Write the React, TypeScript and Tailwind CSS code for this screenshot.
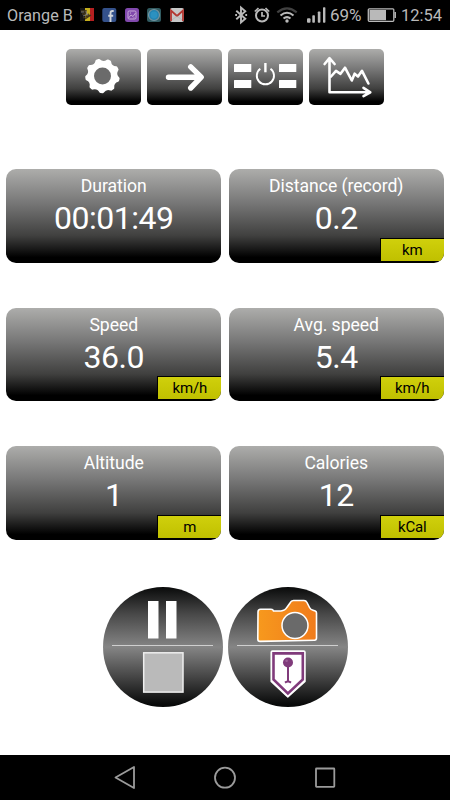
import React from "react";

const gearPath = () => {
  const point = (deg: number, r: number) => {
    const a = (deg * Math.PI) / 180;
    return `${(36.5 + r * Math.cos(a)).toFixed(2)} ${(26.9 + r * Math.sin(a)).toFixed(2)}`;
  };
  let d = `M${point(89, 16)}`;
  for (let i = 0; i < 9; i++) {
    const tip = 93 + i * 40;
    d += `L${point(tip + 4, 16)}Q${point(tip + 20, 11.6)} ${point(tip + 36, 16)}`;
  }
  return d + "Z";
};

const ToolButton: React.FC<{ label: string; children: React.ReactNode }> = ({ label, children }) => (
  <button
    aria-label={label}
    className="h-[56px] w-[75px] shrink-0 overflow-hidden rounded-[5px] bg-[linear-gradient(to_bottom,#adadab_0%,#777777_36%,#40403f_71%,#000000_94%)]"
  >
    <svg viewBox="0 0 75 56" className="block h-[56px] w-[75px]" fill="none" stroke="#fff">
      {children}
    </svg>
  </button>
);

const Toolbar = () => (
  <div className="flex justify-center gap-[6.3px] pt-[19px]">
    <ToolButton label="Settings">
      <path d={gearPath()} fill="#fff" strokeWidth="2.6" strokeLinejoin="round" />
      <circle cx="36.5" cy="26.9" r="8.5" fill="#6b6b6b" stroke="none" />
    </ToolButton>
    <ToolButton label="Next">
      <path d="M21.5 28.2H54M43.7 17.8L54.2 28.2L43.7 39" strokeWidth="5.4" strokeLinecap="round" strokeLinejoin="round" />
    </ToolButton>
    <ToolButton label="Display">
      <g fill="#fff" stroke="none">
        <rect x="6" y="15" width="17.3" height="8" rx=".5" />
        <rect x="6" y="31" width="17.3" height="8" rx=".5" />
        <rect x="51" y="15" width="17.3" height="8" rx=".5" />
        <rect x="51" y="31" width="17.3" height="8" rx=".5" />
      </g>
      <path d="M32.3 19.8A8.6 8.6 0 1 0 42.5 19.8" strokeWidth="1.9" />
      <path d="M37.4 14V23.3" strokeWidth="2.4" />
    </ToolButton>
    <ToolButton label="Chart">
      <g strokeLinecap="round" strokeLinejoin="round">
        <path d="M15.6 15L20.5 9.2L25.6 15M20.5 9.8V43.3H61M54.5 38.8L61.3 43.3L54.5 47.2" strokeWidth="2.6" />
        <path d="M22 27.5L27 21.8L31.5 24.8L36 18.7L42.8 31.5L45.6 24.7L49 27.5L53 21.8L59.4 34.5" strokeWidth="2.6" />
      </g>
    </ToolButton>
  </div>
);

const metrics = [
  { label: "Duration", value: "00:01:49", unit: "" },
  { label: "Distance (record)", value: "0.2", unit: "km" },
  { label: "Speed", value: "36.0", unit: "km/h" },
  { label: "Avg. speed", value: "5.4", unit: "km/h" },
  { label: "Altitude", value: "1", unit: "m" },
  { label: "Calories", value: "12", unit: "kCal" },
];

const MetricCard: React.FC<{ label: string; value: string; unit: string }> = ({ label, value, unit }) => (
  <div className="relative h-[93.5px] overflow-hidden rounded-[10px] bg-[linear-gradient(to_bottom,#adadab_0%,#777777_36%,#40403f_71%,#000000_94%)] text-center text-white">
    <div className="pt-[6px] text-[17.6px] leading-[22px] tracking-[-0.05px]">{label}</div>
    <div className="pt-[2px] text-[32px] leading-[38px] tracking-[-0.5px]">{value}</div>
    {unit && (
      <div className="absolute right-0 bottom-[2px] h-[23px] w-[64px] border-t border-l border-black bg-linear-to-b from-[#d0d00c] to-[#c0c000] text-[15px] leading-[22px] tracking-[-0.2px] text-black">
        {unit}
      </div>
    )}
  </div>
);

const StatusBar = () => (
  <header className="flex h-[30px] items-center bg-black pl-[7px] text-[#b9b9b9]">
    <span className="w-[73px] pt-[2px] text-[16.2px] whitespace-nowrap">Orange B</span>
    {/* Notifications */}
    <svg width="106" height="16" viewBox="0 0 106 16">
      <rect x="0" y="1" width="5" height="13" fill="#141414" />
      <rect x="5" y="1" width="5" height="13" fill="#c4ad1d" />
      <rect x="10" y="1" width="4" height="13" fill="#b52020" />
      <path d="M1 4h4v3H2m4-4v5l3-1m-6 4l7-3M5 12l6-4" fill="none" stroke="#42371d" strokeWidth="1.3" />
      <path d="M1 5h3M6 4l1 4M3 9l5-2" stroke="#999" strokeWidth=".7" />
      <rect x="22.3" y="1" width="14" height="14" rx="2" fill="#34518b" />
      <path d="M33.7 4h-1.2q-2 0-2 2v9M28.2 8.7h5" fill="none" stroke="#d0d4da" strokeWidth="1.9" />
      <rect x="45" y="1" width="14" height="14" rx="2.5" fill="#8149ad" />
      <g fill="none" stroke="#c4a9d5" strokeWidth="1">
        <rect x="48" y="4" width="8" height="8" rx="1.2" />
        <path d="M48.5 11L51 8L53 9.5L55.5 6M50 6h1M53.5 10.8h1" />
      </g>
      <rect x="67" y="1" width="14" height="14" rx="2.5" fill="#315b61" />
      <circle cx="74" cy="8" r="5.5" fill="#2384b2" stroke="#77929c" strokeWidth="1.2" />
      <circle cx="74" cy="8" r="3.4" fill="#2c91c0" />
      <rect x="90" y="1" width="14" height="14" rx="2" fill="#c7c7c7" />
      <path d="M91 14V3.5L97 9L103 3.5V14" fill="none" stroke="#b43630" strokeWidth="1.8" />
      <path d="M92 13L97 9L102 13" fill="none" stroke="#aaa" strokeWidth=".6" />
    </svg>
    {/* Bluetooth, alarm, wifi and signal */}
    <svg className="ml-[48px]" width="94" height="20" viewBox="0 0 94 20" fill="none" stroke="currentColor">
      <path d="M2.3 5.7L11.3 13.7L7 17.5V2.5L11.3 6.3L2.3 14.3" strokeWidth="1.9" />
      <path d="M1.2 10h1.8M11.3 10h1.8" strokeWidth="1.9" />
      <circle cx="28" cy="10.5" r="6" strokeWidth="2" />
      <path d="M28 7V11H31M20.8 6.5L24.5 3M35.2 6.5L31.5 3" strokeWidth="1.7" />
      <path d="M43.3 7.4Q53 -.5 62.7 7.4" stroke="#414141" strokeWidth="2.2" />
      <path d="M46.5 10.5Q53 5 59.5 10.5M49.5 13.5Q53 10.7 56.5 13.5" strokeWidth="2.1" />
      <circle cx="53" cy="16" r="1.7" fill="currentColor" stroke="none" />
      <g fill="currentColor" stroke="none">
        <rect x="73" y="13.2" width="3.5" height="4.6" rx="1" />
        <rect x="78.3" y="10.3" width="2.6" height="7.5" rx=".7" />
        <rect x="83.8" y="6.5" width="2.6" height="11.3" rx=".7" />
        <rect x="89" y="2.3" width="2.4" height="15.5" rx=".7" />
      </g>
    </svg>
    <span className="ml-[2px] w-[37px] pt-[2px] text-[17px]">69%</span>
    <svg width="30" height="16" viewBox="0 0 30 16" fill="none">
      <rect x="1.3" y="1.8" width="25.5" height="12.5" rx="1" stroke="#b9b9b9" strokeWidth="1.3" />
      <rect x="2.5" y="3" width="16.5" height="10.2" fill="#b9b9b9" />
      <path d="M28.2 5V11" stroke="#b9b9b9" strokeWidth="1.5" />
    </svg>
    <span className="ml-[4px] pt-[2px] text-[16.5px]">12:54</span>
  </header>
);

const RoundButton: React.FC<{ label: string; children: React.ReactNode }> = ({ label, children }) => (
  <button
    aria-label={label}
    className="h-[120px] w-[120px] overflow-hidden rounded-full bg-[linear-gradient(to_bottom,#090a0a_0%,#474747_22%,#858585_50%,#454545_75%,#080909_98%)]"
  >
    <svg viewBox="0 0 120 120" className="block h-[120px] w-[120px]">
      <path d="M9 58.5H110" stroke="#cfcfcf" strokeWidth="1.1" />
      {children}
    </svg>
  </button>
);

const Controls = () => (
  <div className="mt-[47px] flex justify-center gap-[5px]">
    <RoundButton label="Pause or stop">
      <path d="M45 14h10.5v37.5H45zM63 14h10.5v37.5H63z" fill="#fff" />
      <rect x="40.7" y="65.8" width="39.3" height="39.3" fill="#bababa" stroke="#eee" strokeWidth="1.5" />
    </RoundButton>
    <RoundButton label="Photo or waypoint">
      <defs>
        <linearGradient id="orange">
          <stop stopColor="#f7991d" />
          <stop offset="1" stopColor="#f07b1c" />
        </linearGradient>
      </defs>
      <path
        d="M32.5 22.2H43Q45 22.2 45.5 24H53Q57 23.8 59 20.2L62.2 15.7Q63.2 13.5 65.5 13.5H76Q78 13.5 79 15.5L81.5 20.5Q82.5 22.5 85 23.2L87.3 24Q88.5 24.5 88.5 26V51Q88.5 53.2 86.5 53.2L32 54.4Q29.8 54.4 29.8 52L30 25Q30 22.2 32.5 22.2Z"
        fill="url(#orange)"
        stroke="#fff"
        strokeWidth="1.6"
        strokeLinejoin="round"
      />
      <circle cx="67" cy="38.5" r="13" fill="#6a6a6a" stroke="#fff" strokeWidth="1.5" />
      <path d="M44.5 64H75.8Q77 64 77 65.3V94.5L59.8 110L43.2 94.5V65.3Q43.2 64 44.5 64Z" fill="#fff" stroke="#fff" strokeWidth="1.5" strokeLinejoin="round" />
      <path d="M45.5 66.4H74.8V92.4L59.9 106.4L45.5 92.4Z" fill="#fff" stroke="#803b7b" strokeWidth="2.6" />
      <path d="M60 77V94.6M57 95.6Q60 93.5 63 95.6" fill="none" stroke="#803b7b" strokeWidth="2" />
      <circle cx="60" cy="75.5" r="5" fill="#803b7b" />
      <circle cx="58.6" cy="73.8" r="1.3" fill="#9c6298" />
    </RoundButton>
  </div>
);

const NavigationBar = () => (
  <nav className="flex h-[45px] items-center justify-center bg-black text-[#9b9b9b]">
    <svg width="250" height="45" viewBox="0 0 250 45" fill="none" stroke="currentColor" strokeWidth="1.8" strokeLinejoin="round">
      <path d="M15.5 22.5L34 12V33Z" />
      <circle cx="125" cy="22.7" r="10" />
      <rect x="216" y="13.5" width="18.3" height="18.3" rx=".5" />
    </svg>
  </nav>
);

export default function App() {
  return (
    <div className="flex h-[800px] w-[450px] flex-col overflow-hidden bg-white font-['Roboto',sans-serif]">
      <StatusBar />
      <main className="flex-1">
        <Toolbar />
        <div className="mt-[64px] grid grid-cols-2 gap-x-[7.5px] gap-y-[45.2px] px-[6.3px]">
          {metrics.map((metric) => (
            <MetricCard key={metric.label} {...metric} />
          ))}
        </div>
        <Controls />
      </main>
      <NavigationBar />
    </div>
  );
}
